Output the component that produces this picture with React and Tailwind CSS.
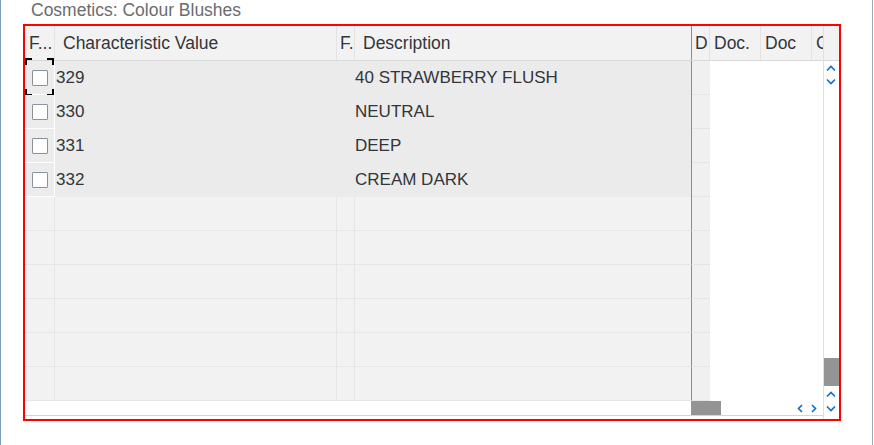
import React from 'react';

const rows = [
  { value: '329', text: '40 STRAWBERRY FLUSH', focused: true },
  { value: '330', text: 'NEUTRAL' },
  { value: '331', text: 'DEEP' },
  { value: '332', text: 'CREAM DARK' },
];

function FocusFrame() {
  return (
    <svg className="absolute left-0 top-[-3px]" width="30" height="38" viewBox="0 0 30 38">
      <path d="M1 7V1H7M22 1H28V7M1 31V37H7M22 37H28V31" fill="none" stroke="#000" strokeWidth="2" />
    </svg>
  );
}

function DataRow({ row }) {
  return (
    <div className="flex h-[34px]">
      <div className="relative w-[30px] flex items-center justify-center bg-[#ececec] border-r border-b border-white">
        <div className="w-4 h-4 bg-white border border-[#89919a] rounded-[1px]" />
        {row.focused && <FocusFrame />}
      </div>
      <div className="w-[282px] flex items-center pl-px bg-[#ebebeb]">{row.value}</div>
      <div className="w-[18px] bg-[#ebebeb]" />
      <div className="w-[337px] flex items-center bg-[#ebebeb] border-r border-[#8c8c8c]">{row.text}</div>
      <div className="w-[18px] bg-[#f0f0f0] border-b border-[#e4e4e4]" />
      <div className="flex-1 bg-white" />
    </div>
  );
}

function EmptyRow() {
  return (
    <div className="flex h-[34px]">
      <div className="w-[30px] bg-[#f2f2f2] border-r border-b border-[#e6e6e6]" />
      <div className="w-[282px] bg-[#f2f2f2] border-r border-b border-[#e6e6e6]" />
      <div className="w-[18px] bg-[#f2f2f2] border-r border-b border-[#e6e6e6]" />
      <div className="w-[337px] bg-[#f2f2f2] border-b border-b-[#e6e6e6] border-r border-r-[#8c8c8c]" />
      <div className="w-[18px] bg-[#f0f0f0] border-b border-[#e4e4e4]" />
      <div className="flex-1 bg-white" />
    </div>
  );
}

export default function App() {
  return (
    <div
      className="w-[873px] h-[445px] bg-white border-l border-l-[#7b9cc0] border-r border-r-[#a3acb6] text-[17px] text-[#32363a]"
      style={{ fontFamily: '"Liberation Sans", Arial, sans-serif' }}
    >
      {/* Title */}
      <div className="h-6 pl-[30px] leading-5 text-[17.5px] text-[#6a6d70]">Cosmetics: Colour Blushes</div>

      {/* Table */}
      <div className="ml-[22px] w-[818px] h-[397px] border-2 border-[#ff0000] flex">
        <div className="w-[798px] flex flex-col">
          {/* Header */}
          <div className="flex h-[35px] bg-[#f2f2f2] border-b border-[#d9d9d9] leading-5 text-[17.5px] whitespace-nowrap">
            <div className="w-[30px] flex items-center pl-1 border-r border-[#e3e3e3] overflow-hidden">F...</div>
            <div className="w-[282px] flex items-center pl-2 border-r border-[#e3e3e3]">Characteristic Value</div>
            <div className="w-[18px] flex items-center pl-[3px] border-r border-[#e3e3e3] overflow-hidden">F.</div>
            <div className="w-[337px] flex items-center pl-2 border-r border-[#8c8c8c]">Description</div>
            <div className="w-[18px] flex items-center pl-[3px] border-r border-[#e3e3e3] overflow-hidden">D</div>
            <div className="w-[51px] flex items-center pl-1 border-r border-[#e3e3e3]">Doc.</div>
            <div className="w-[51px] flex items-center pl-1 border-r border-[#e3e3e3]">Doc</div>
            <div className="flex-1 flex items-center pl-1 overflow-hidden">C</div>
          </div>

          {/* Rows */}
          {rows.map((row) => (
            <DataRow key={row.value} row={row} />
          ))}
          {[0, 1, 2, 3, 4, 5].map((i) => (
            <EmptyRow key={i} />
          ))}

          {/* Horizontal scrollbar */}
          <div className="flex items-start h-[15px] border-b border-[#d5d5d5] mt-auto">
            <div className="w-[666px]" />
            <div className="w-[30px] h-[14px] bg-[#949494]" />
            <svg className="ml-auto mr-[5px]" width="22" height="14" viewBox="0 0 22 14">
              <polyline points="6,4 2.5,7.5 6,11" fill="none" stroke="#0a6ed1" strokeWidth="1.6" />
              <polyline points="16,4 19.5,7.5 16,11" fill="none" stroke="#0a6ed1" strokeWidth="1.6" />
            </svg>
          </div>
          <div className="h-[3px]" />
        </div>

        {/* Vertical scrollbar */}
        <div className="flex-1 flex flex-col border-l border-[#e0e0e0]">
          <div className="h-[35px] bg-[#f2f2f2] border-b border-[#d9d9d9]" />
          <svg width="15" height="28" viewBox="0 0 15 28">
            <polyline points="3,9.5 7,5.5 11,9.5" fill="none" stroke="#0a6ed1" strokeWidth="1.6" />
            <polyline points="3,18.5 7,22.5 11,18.5" fill="none" stroke="#0a6ed1" strokeWidth="1.6" />
          </svg>
          <div className="flex-1" />
          <div className="h-[28px] bg-[#949494]" />
          <svg width="15" height="33" viewBox="0 0 15 33">
            <polyline points="3,10.5 7,6.5 11,10.5" fill="none" stroke="#0a6ed1" strokeWidth="1.6" />
            <polyline points="3,20.5 7,24.5 11,20.5" fill="none" stroke="#0a6ed1" strokeWidth="1.6" />
          </svg>
        </div>
      </div>
    </div>
  );
}
